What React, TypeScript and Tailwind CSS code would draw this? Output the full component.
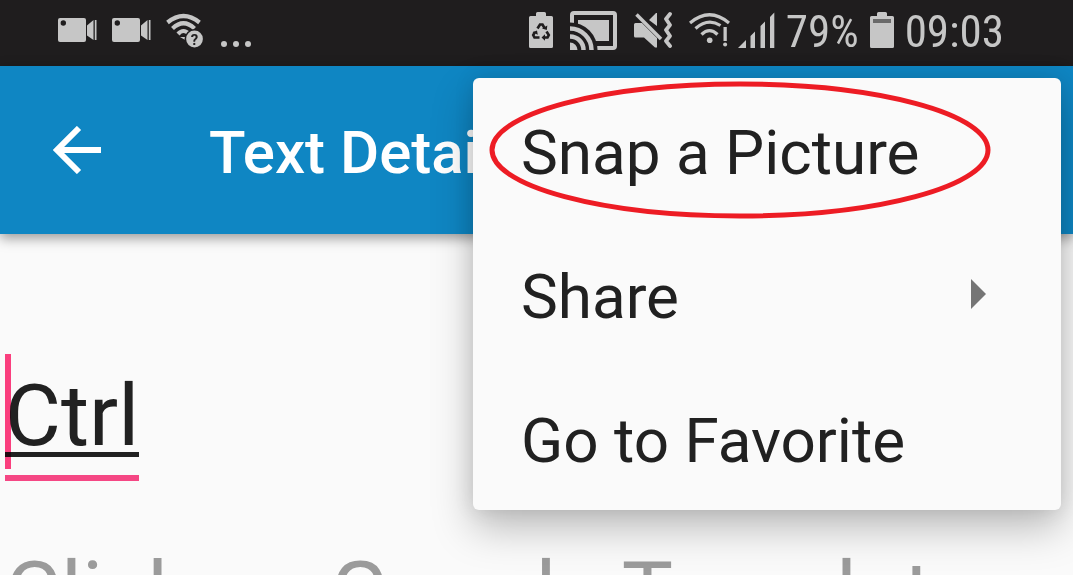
import type { ReactNode } from "react"

function StatusIcon({
  width,
  children,
}: {
  width: number
  children: ReactNode
}) {
  return (
    <svg
      width={width}
      height={40}
      viewBox={`0 0 ${width} 40`}
      fill="currentColor"
      className="shrink-0"
      aria-hidden="true"
    >
      {children}
    </svg>
  )
}

function CameraIcon() {
  return (
    <StatusIcon width={39}>
      <rect y="8" width="28" height="24" rx="2" />
      <circle cx="5.3" cy="13" r="2.7" fill="#1f1d1e" />
      <path d="M29 15.500 35.500 10v20L29 25.500zM36.800 10h1.700v20h-1.700z" />
    </StatusIcon>
  )
}

function WifiUnknownIcon() {
  return (
    <StatusIcon width={37}>
      <g fill="none" stroke="currentColor" strokeWidth="4.200">
        <path d="M1.500 12.500Q17.500-.5 33.500 12.500" />
        <path d="M6.500 18.500Q17.500 8 28.500 18.500" />
        <path d="M12 24Q17.500 18 23 24" />
      </g>
      <path d="M14 27h7v4z" />
      <circle cx="28.500" cy="29" r="10" fill="#1f1d1e" />
      <circle cx="28.500" cy="29" r="8.400" />
      <text
        x="28.500"
        y="34.500"
        textAnchor="middle"
        fill="#1f1d1e"
        className="font-['Roboto',sans-serif] text-[15px] font-bold"
      >
        ?
      </text>
    </StatusIcon>
  )
}

function BatteryIcon({ children }: { children: ReactNode }) {
  return (
    <StatusIcon width={24}>
      <path d="M7 3.500Q7 2 8.500 2h7Q17 2 17 3.500V6h5.500Q24 6 24 7.500v29Q24 38 22.500 38h-21Q0 38 0 36.500v-29Q0 6 1.500 6H7z" />
      {children}
    </StatusIcon>
  )
}

function CastIcon() {
  return (
    <StatusIcon width={47}>
      <rect
        x="2"
        y="3"
        width="43"
        height="35"
        rx="2"
        fill="none"
        stroke="currentColor"
        strokeWidth="4"
      />
      <path d="M8 10h31v21H8z" />
      <path d="M0 12.500A27.500 27.500 0 0 1 27.500 40H0z" fill="#1f1d1e" />
      <path d="M0 32.500A7.500 7.500 0 0 1 7.500 40H0z" />
      <g fill="none" stroke="currentColor" strokeWidth="4.500">
        <path d="M0 26.500A13.500 13.500 0 0 1 13.500 40" />
        <path d="M0 18.500A21.500 21.500 0 0 1 21.500 40" />
      </g>
    </StatusIcon>
  )
}

function VibrateIcon() {
  return (
    <StatusIcon width={38}>
      <path d="M1.500 13H8L23 28v9.500h-2L10 27.500H1.500Q0 27.500 0 26V14.500Q0 13 1.500 13zM15 10l7-7h1v13z" />
      <path
        d="M2.500 4.500 27 29"
        fill="none"
        stroke="currentColor"
        strokeWidth="3.500"
      />
      <path
        d="M36 4 32 9l4 6-4 5 4 6-4 5 4 5"
        fill="none"
        stroke="currentColor"
        strokeWidth="3.800"
        strokeLinecap="round"
        strokeLinejoin="round"
      />
    </StatusIcon>
  )
}

function WifiAlertIcon() {
  return (
    <StatusIcon width={41}>
      <g fill="none" stroke="currentColor" strokeWidth="3.200">
        <path d="M1 13Q20.500-3.500 40 13" />
        <path d="M6.500 18.500Q19 7.500 31.500 15.500" />
        <path d="M12.500 24.500Q20.500 16.500 28.500 24.500" />
      </g>
      <circle cx="20.700" cy="30.300" r="2.800" />
      <path d="M34.500 17h3.300v14h-3.300z" />
      <circle cx="36.100" cy="34.500" r="2" />
    </StatusIcon>
  )
}

function SignalIcon() {
  return (
    <StatusIcon width={37}>
      <path d="M0 38l8-8v8zM12.500 26l4.500-4.500V38h-4.500zM22.500 16l4.500-4.500V38h-4.500zM32 7l4.300-4.500V38H32z" />
    </StatusIcon>
  )
}

function RecycleMark() {
  return (
    <g>
      <g fill="none" stroke="#1f1d1e" strokeWidth="2.600">
        <path d="M8.500 18.500 11 14.500h2.500l2 3.500" />
        <path d="M17.500 21.500l2.300 3.500-1.300 2.500H15.500" />
        <path d="M10.500 27.500H5.500l-1.300-2.500 1.800-3" />
      </g>
      <path
        d="M13 18.500l4.800 1.500.5-4.500zM16 24.300v6.400l-3.500-3.200zM3.500 22.300l4.500-1.800.8 4.300z"
        fill="#1f1d1e"
      />
    </g>
  )
}

function StatusBar() {
  return (
    <div className="flex h-[66px] items-center justify-between bg-[#1f1d1e] pr-[69px] pb-1.5 pl-[58px] text-[#c6c6c6]">
      <div className="flex items-center gap-[15px]">
        <CameraIcon />
        <CameraIcon />
        <WifiUnknownIcon />
        <StatusIcon width={33}>
          <circle cx="6" cy="34" r="3" />
          <circle cx="18" cy="34" r="3" />
          <circle cx="30" cy="34" r="3" />
        </StatusIcon>
      </div>
      <div className="flex items-center gap-2">
        <div className="flex items-center gap-[17px]">
          <BatteryIcon>
            <RecycleMark />
          </BatteryIcon>
          <CastIcon />
          <VibrateIcon />
          <WifiAlertIcon />
        </div>
        <div className="flex items-center gap-[11px] font-['Roboto_Condensed','Roboto',sans-serif] text-[45px] leading-[40px]">
          <SignalIcon />
          <span className="pt-1">79%</span>
          <BatteryIcon>
            <path d="M3 9h18v4H3z" fill="#6a6a6a" />
          </BatteryIcon>
          <time className="pt-1">09:03</time>
        </div>
      </div>
    </div>
  )
}

function MenuItem({ children }: { children: ReactNode }) {
  return (
    <button
      type="button"
      role="menuitem"
      className="relative flex h-36 w-full items-center justify-between pr-[75px] pl-12 text-left text-[62px] leading-[72px]"
    >
      {children}
    </button>
  )
}

function OverflowMenu() {
  return (
    <div
      role="menu"
      className="absolute top-3 right-3 z-20 w-[588px] rounded-md bg-[#fafafa] text-[#212121] shadow-[0_18px_40px_rgba(0,0,0,0.25),0_0_20px_rgba(0,0,0,0.1)]"
    >
      <MenuItem>
        <span className="pt-1.5">Snap a Picture</span>
        <svg
          viewBox="0 0 502 138"
          className="absolute top-[3px] left-4 w-[502px]"
          fill="none"
          stroke="#ed1c24"
          strokeWidth="5"
          aria-hidden="true"
        >
          <ellipse cx="251" cy="69" rx="248" ry="66" />
        </svg>
      </MenuItem>
      <MenuItem>
        <span className="pt-1.5">Share</span>
        <svg
          width="15"
          height="30"
          viewBox="0 0 15 30"
          fill="#757575"
          aria-hidden="true"
        >
          <path d="M0 0l15 15L0 30z" />
        </svg>
      </MenuItem>
      <MenuItem>
        <span className="pt-1.5">Go to Favorite</span>
      </MenuItem>
    </div>
  )
}

export default function App() {
  return (
    <div className="h-screen overflow-hidden bg-[#fafafa] font-['Roboto',sans-serif]">
      <StatusBar />
      <header className="relative z-10 flex h-[168px] items-center bg-[#0f86c3] pl-[53px] text-white shadow-[0_4px_12px_rgba(0,0,0,0.4)]">
        <button type="button" aria-label="Back">
          <svg
            width="48"
            height="48"
            viewBox="0 0 48 48"
            fill="none"
            stroke="currentColor"
            strokeWidth="6"
          >
            <path d="M48 24H6M26 2 4 24l22 22" />
          </svg>
        </button>
        <h1 className="pt-1.5 pl-[108px] text-[60px] leading-[72px] font-medium whitespace-nowrap">
          Text Details
        </h1>
        <OverflowMenu />
      </header>
      <main className="px-[5px] pt-[120px]">
        <div className="relative w-[134px]">
          <input
            type="text"
            aria-label="Text"
            defaultValue="Ctrl"
            className="block h-[103px] w-full border-b-[5px] border-[#212121] bg-transparent pt-6 text-[86px] leading-[72px] text-[#212121] outline-none"
          />
          <div className="absolute top-0 left-0 h-[115px] w-1.5 bg-[#ff4081] mix-blend-multiply" />
          <div className="mt-[18px] h-1.5 bg-[#f54784]" />
        </div>
        <p className="mt-[62px] text-[86px] leading-[100px] whitespace-nowrap text-[#9b9b9b]">
          Click on Google Translate
        </p>
      </main>
    </div>
  )
}
